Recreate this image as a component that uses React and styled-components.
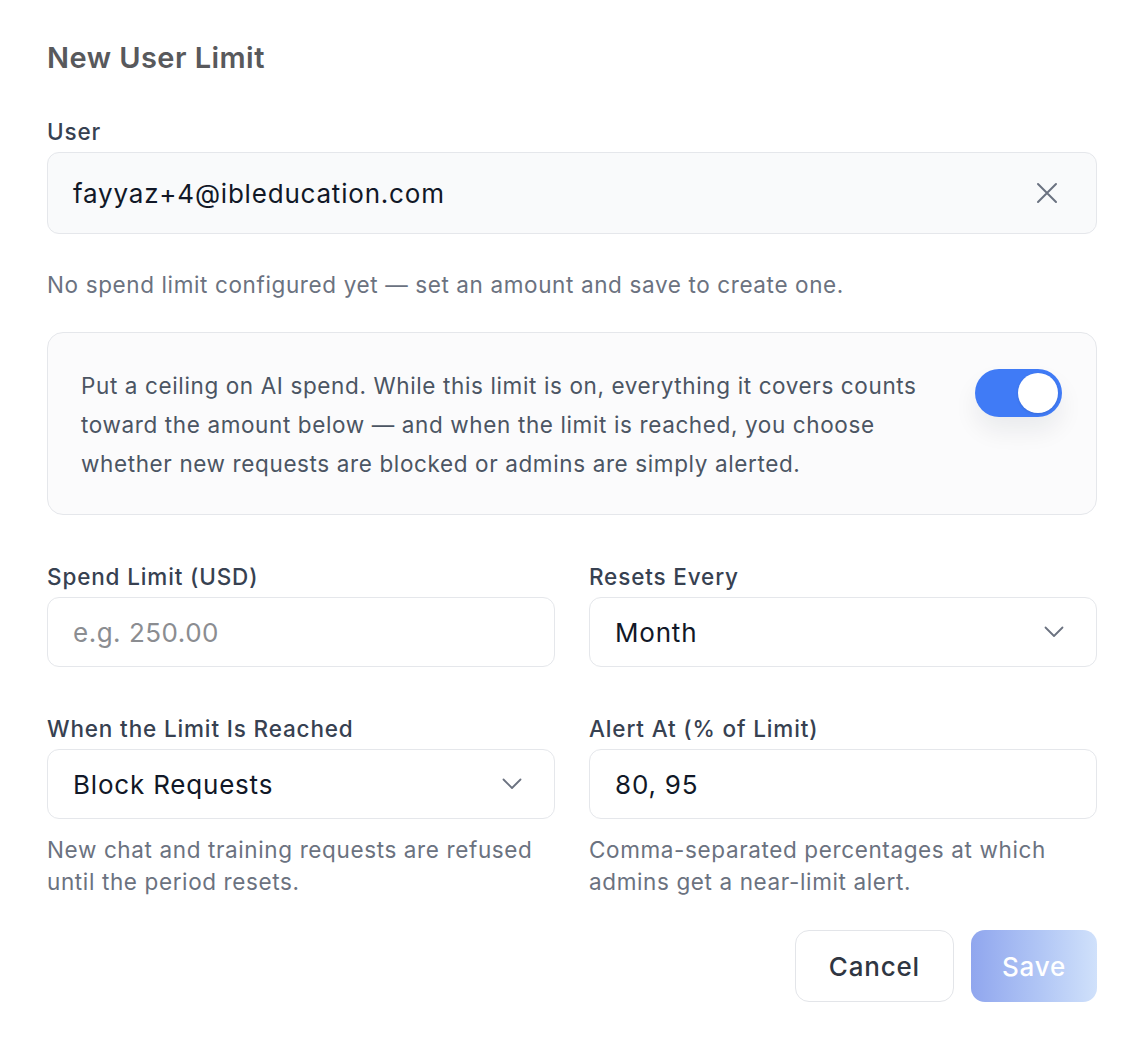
import React, { useState } from "react";
import styled, { createGlobalStyle } from "styled-components";

const GlobalStyle = createGlobalStyle`
  html, body {
    margin: 0;
    padding: 0;
    background: #ffffff;
  }
  body {
    font-family: Inter, "Noto Sans", "Liberation Sans", sans-serif;
    -webkit-font-smoothing: antialiased;
  }
  * {
    box-sizing: border-box;
  }
`;

const Dialog = styled.div`
  width: 1140px;
  min-height: 1044px;
  background: #ffffff;
  border-radius: 24px;
  padding: 40px 43px 40px 47px;
`;

const Title = styled.h2`
  margin: 0;
  font-size: 29px;
  line-height: 36px;
  font-weight: 600;
  color: #58595c;
  letter-spacing: 0.45px;
`;

const Field = styled.div`
  display: flex;
  flex-direction: column;
  margin-top: ${(p) => p.$top || 0}px;
`;

const Label = styled.label`
  font-size: 22.5px;
  line-height: 30px;
  font-weight: 500;
  color: #374151;
  letter-spacing: 0.85px;
  margin-bottom: 5px;
`;

const Control = styled.div`
  display: flex;
  align-items: center;
  height: ${(p) => p.$height || 70}px;
  padding: 0 ${(p) => (p.$icon ? 32 : 26)}px 0 25px;
  border: 1px solid #e5e7eb;
  border-radius: 12px;
  background: ${(p) => (p.$muted ? "#f9fafb" : "#ffffff")};
  font-size: 26px;
  letter-spacing: ${(p) => (p.$placeholder ? 0.5 : 0.8)}px;
  color: ${(p) => (p.$placeholder ? "#8b8d91" : "#111827")};
`;

const Value = styled.span`
  flex: 1;
`;

const IconBtn = styled.span`
  display: flex;
  align-items: center;
  justify-content: center;
  color: #6b7280;
  margin-right: 6px;
`;

const Hint = styled.p`
  margin: ${(p) => p.$top || 0}px 0 0;
  font-size: 22.5px;
  line-height: ${(p) => p.$lh || 30}px;
  letter-spacing: 0.62px;
  color: #6b7280;
`;

const InfoBox = styled.div`
  margin-top: 32px;
  display: flex;
  align-items: flex-start;
  gap: 44px;
  padding: 33px 34px 31px 33px;
  border: 1px solid #e5e7eb;
  border-radius: 16px;
  background: #fbfbfc;
`;

const InfoText = styled.p`
  flex: 1;
  margin: 0;
  font-size: 22.5px;
  line-height: 39px;
  letter-spacing: 0.62px;
  color: #4b5563;
`;

const Toggle = styled.button`
  flex: none;
  position: relative;
  width: 87px;
  height: 48px;
  margin-top: 3px;
  border: none;
  border-radius: 24px;
  padding: 0;
  cursor: pointer;
  background: ${(p) => (p.$on ? "#407bf6" : "#d1d5db")};
  box-shadow: 0 14px 24px rgba(15, 23, 42, 0.07);
`;

const Knob = styled.span`
  position: absolute;
  top: 4px;
  left: ${(p) => (p.$on ? 43 : 4)}px;
  width: 40px;
  height: 40px;
  border-radius: 50%;
  background: #ffffff;
  box-shadow: 0 1px 3px rgba(0, 0, 0, 0.12);
`;

const Grid = styled.div`
  display: grid;
  grid-template-columns: 1fr 1fr;
  column-gap: 34px;
  row-gap: 47px;
  margin-top: 47px;
`;

const Actions = styled.div`
  display: flex;
  justify-content: flex-end;
  gap: 17px;
  margin-top: 32px;
`;

const Button = styled.button`
  height: 72px;
  padding: 0 ${(p) => (p.$primary ? 31 : 33)}px;
  border-radius: 14px;
  font-family: inherit;
  font-size: 26px;
  font-weight: 500;
  letter-spacing: 0.8px;
  cursor: pointer;
  border: ${(p) => (p.$primary ? "none" : "1.5px solid #e3e5e9")};
  color: ${(p) => (p.$primary ? "#ffffff" : "#2f3642")};
  background: ${(p) =>
    p.$primary
      ? "linear-gradient(90deg, #90a6ee 0%, #b1c6f5 55%, #d0e1fb 100%)"
      : "#ffffff"};
`;

const Close = () => (
  <svg width="22" height="22" viewBox="0 0 22 22" fill="none" stroke="currentColor" strokeWidth="2" strokeLinecap="round">
    <path d="M2 2l18 18M20 2L2 20" />
  </svg>
);

const Chevron = () => (
  <svg width="20" height="12" viewBox="0 0 20 12" fill="none" stroke="#6b7280" strokeWidth="1.8" strokeLinecap="round" strokeLinejoin="round">
    <path d="M1.5 1.5L10 10L18.5 1.5" />
  </svg>
);

const App = () => {
  const [enabled, setEnabled] = useState(true);

  return (
    <>
      <GlobalStyle />
      <Dialog>
        <Title>New User Limit</Title>

        <Field $top={41}>
          <Label>User</Label>
          <Control $height={82} $muted $icon>
            <Value>fayyaz+4@ibleducation.com</Value>
            <IconBtn>
              <Close />
            </IconBtn>
          </Control>
        </Field>
        <Hint $top={36}>
          No spend limit configured yet — set an amount and save to create one.
        </Hint>

        <InfoBox>
          <InfoText>
            Put a ceiling on AI spend. While this limit is on, everything it
            covers counts toward the amount below — and when the limit is
            reached, you choose whether new requests are blocked or admins are
            simply alerted.
          </InfoText>
          <Toggle $on={enabled} onClick={() => setEnabled(!enabled)}>
            <Knob $on={enabled} />
          </Toggle>
        </InfoBox>

        <Grid>
          <Field>
            <Label>Spend Limit (USD)</Label>
            <Control $placeholder>
              <Value>e.g. 250.00</Value>
            </Control>
          </Field>
          <Field>
            <Label>Resets Every</Label>
            <Control $icon>
              <Value>Month</Value>
              <Chevron />
            </Control>
          </Field>
          <Field>
            <Label>When the Limit Is Reached</Label>
            <Control $icon>
              <Value>Block Requests</Value>
              <Chevron />
            </Control>
            <Hint $top={15} $lh={32}>
              New chat and training requests are refused until the period
              resets.
            </Hint>
          </Field>
          <Field>
            <Label>Alert At (% of Limit)</Label>
            <Control>
              <Value>80, 95</Value>
            </Control>
            <Hint $top={15} $lh={32}>
              Comma-separated percentages at which admins get a near-limit
              alert.
            </Hint>
          </Field>
        </Grid>

        <Actions>
          <Button>Cancel</Button>
          <Button $primary>Save</Button>
        </Actions>
      </Dialog>
    </>
  );
};

export default App;
